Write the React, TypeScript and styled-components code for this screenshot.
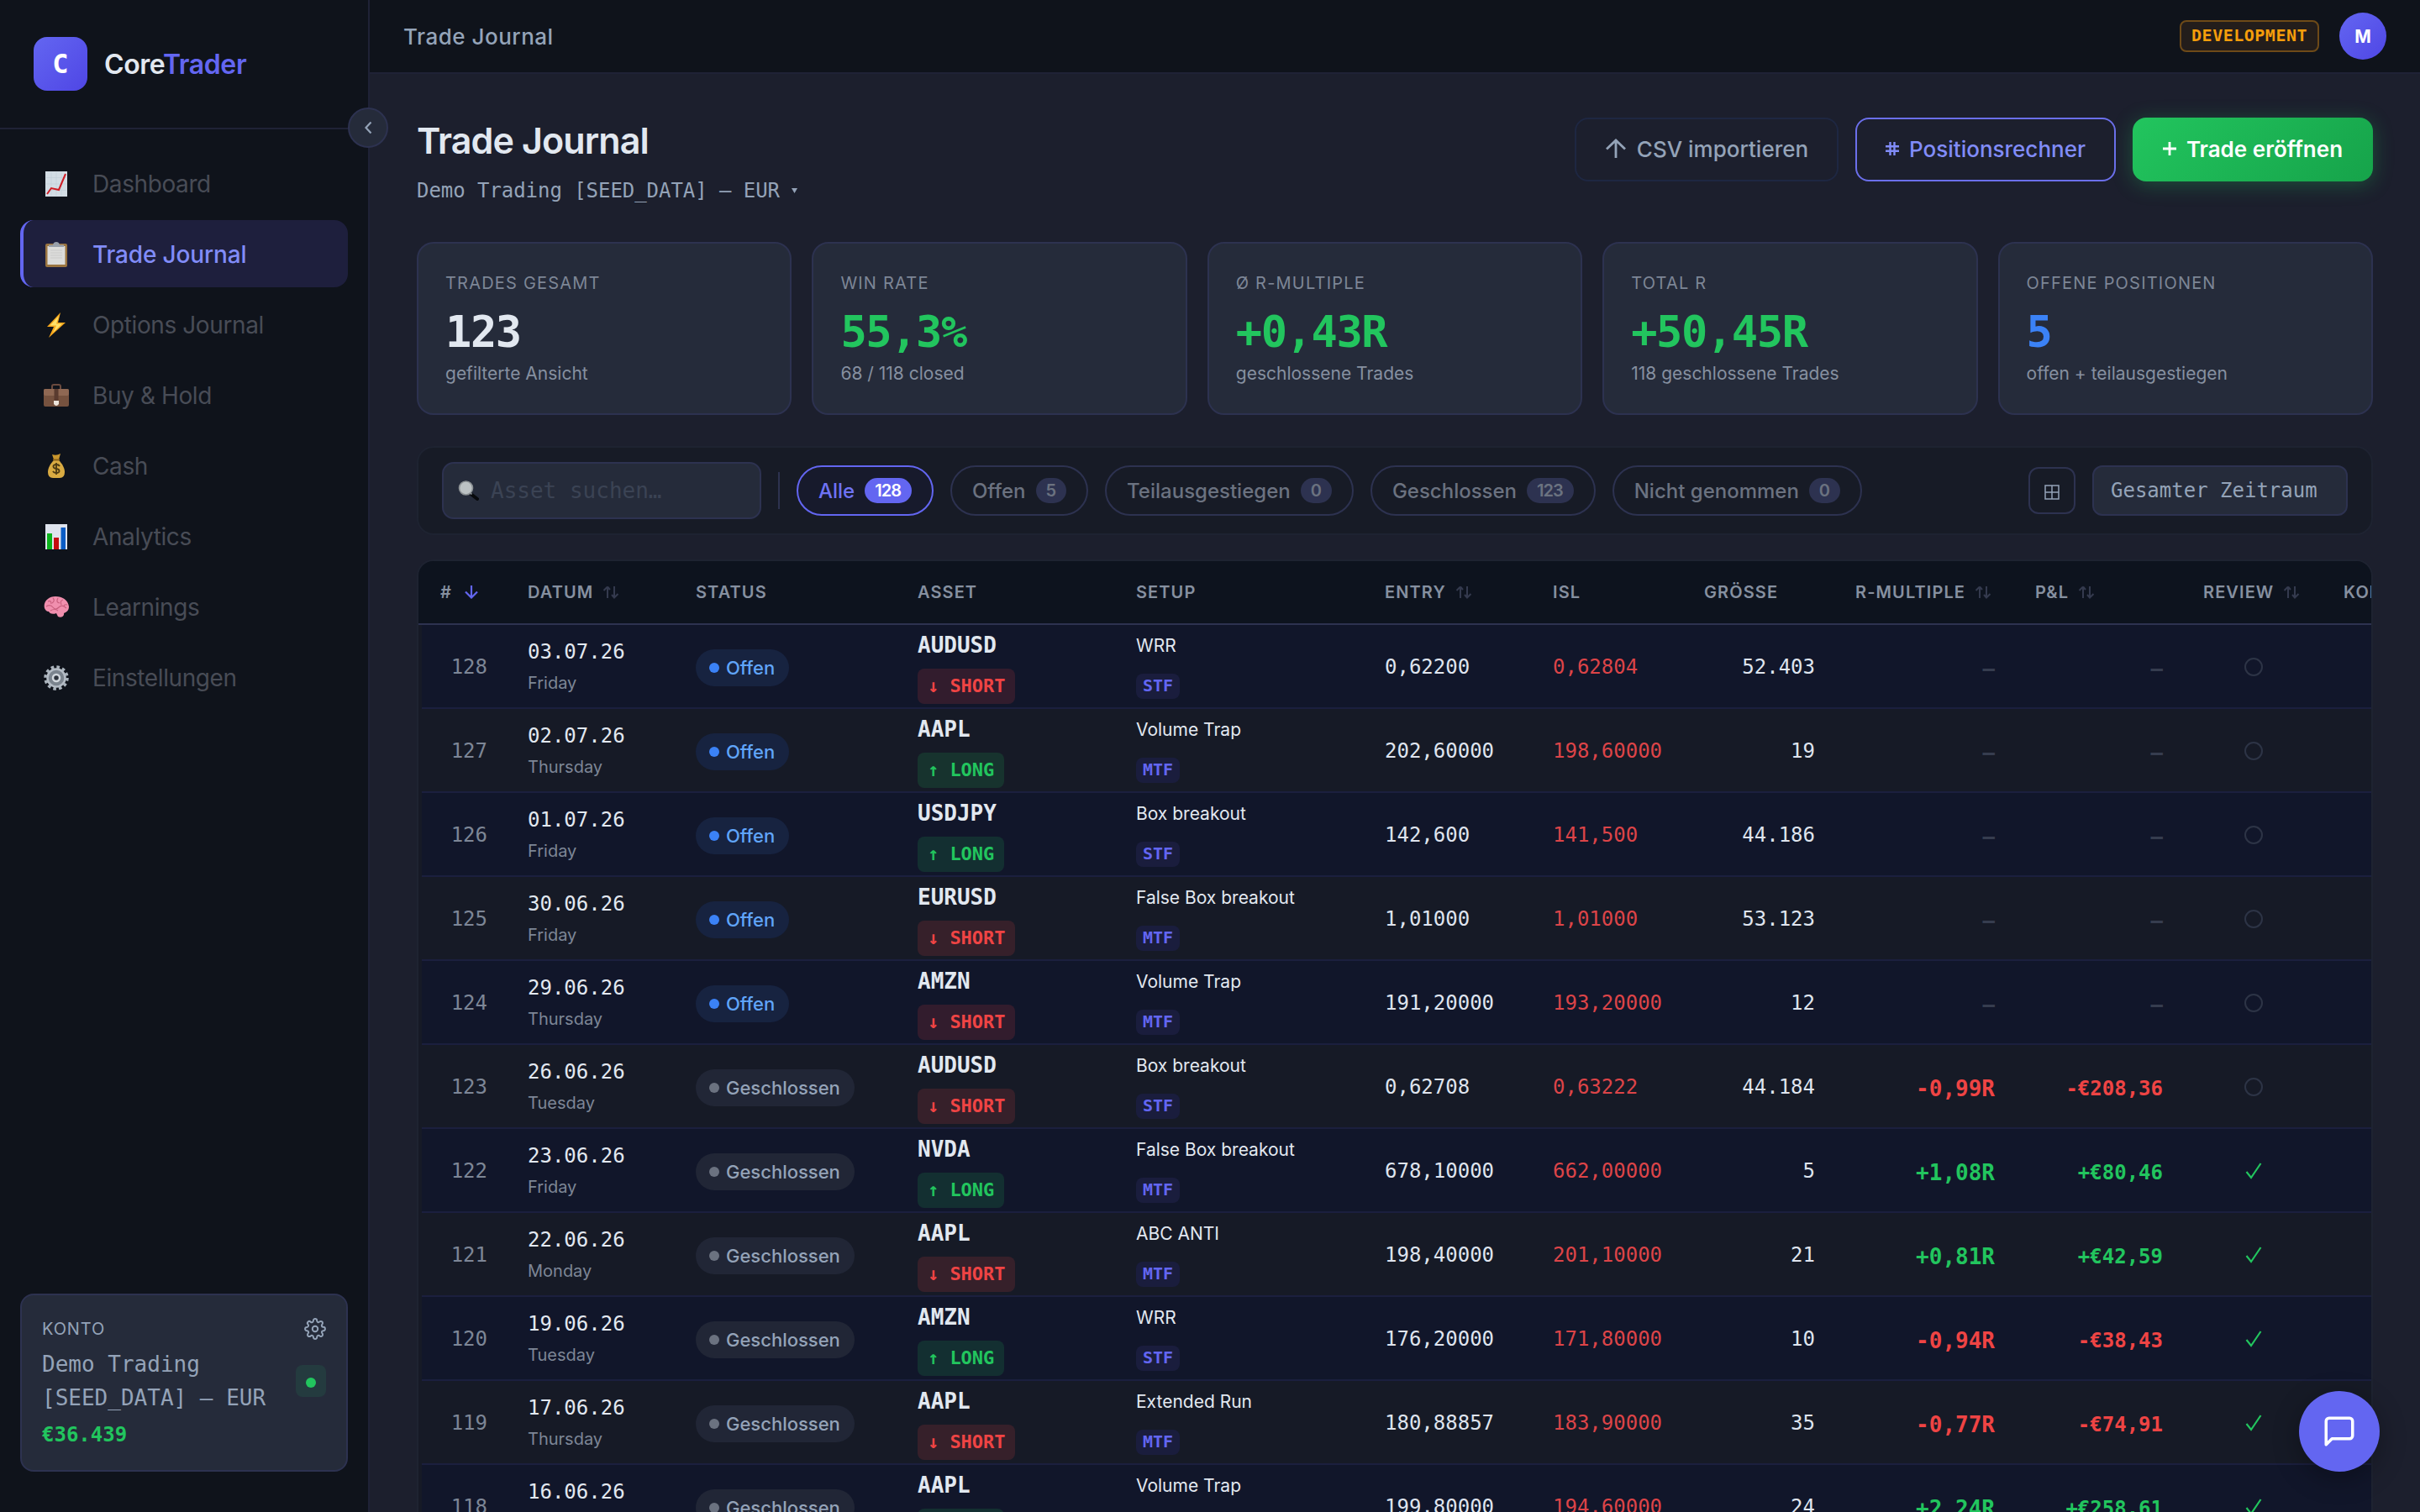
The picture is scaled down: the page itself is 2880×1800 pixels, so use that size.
import { ReactNode } from "react"
import styled, { createGlobalStyle } from "styled-components"

const sans = `Inter, "Open Sans", sans-serif`
const mono = `"DejaVu Sans Mono", "Liberation Mono", monospace`

const GlobalStyle = createGlobalStyle`
  * {
    box-sizing: border-box;
  }

  body {
    background: #1c1f2d;
    color: #e2e8f0;
    font-family: ${sans};
    margin: 0;
  }
`

const Layout = styled.div`
  display: flex;
  height: 1800px;
  overflow: hidden;
  position: relative;
  width: 2880px;
`

/* Sidebar */

const Sidebar = styled.aside`
  background: #0f131b;
  border-right: 2px solid #1f2236;
  display: flex;
  flex-direction: column;
  flex-shrink: 0;
  position: relative;
  width: 440px;
`

const Brand = styled.div`
  align-items: center;
  border-bottom: 2px solid #1f2236;
  display: flex;
  gap: 20px;
  height: 154px;
  padding: 0 40px;
`

const BrandMark = styled.div`
  align-items: center;
  background: linear-gradient(135deg, #6366f1, #4f46e5);
  border-radius: 16px;
  color: #fff;
  display: flex;
  font-family: ${mono};
  font-size: 32px;
  font-weight: 700;
  height: 64px;
  justify-content: center;
  width: 64px;
`

const BrandName = styled.div`
  font-size: 32px;
  font-weight: 600;
  letter-spacing: -0.4px;

  span {
    color: #6366f1;
  }
`

const CollapseButton = styled.button`
  align-items: center;
  background: #252b3a;
  border: 2px solid #2d3250;
  border-radius: 50%;
  color: #94a3b8;
  display: flex;
  height: 48px;
  justify-content: center;
  left: 414px;
  padding: 0;
  position: absolute;
  top: 128px;
  width: 48px;
  z-index: 2;
`

const Nav = styled.nav`
  display: flex;
  flex: 1;
  flex-direction: column;
  gap: 4px;
  padding: 24px;
`

const NavItem = styled.a<{ $active?: boolean }>`
  align-items: center;
  background: ${(props) => (props.$active ? "#1e1f3d" : "transparent")};
  border-left: 4px solid ${(props) => (props.$active ? "#6366f1" : "transparent")};
  border-radius: 16px;
  color: ${(props) => (props.$active ? "#818cf8" : "#484c56")};
  display: flex;
  font-size: 28px;
  font-weight: ${(props) => (props.$active ? 500 : 400)};
  gap: 24px;
  height: 80px;
  letter-spacing: ${(props) => (props.$active ? "-0.15px" : "-0.4px")};
  padding: 1px 0 0 20px;
`

const NavIcon = styled.span`
  display: flex;
  justify-content: center;
  width: 38px;
`

const Account = styled.div`
  background: #252b3a;
  border: 2px solid #2d3250;
  border-radius: 16px;
  height: 212px;
  margin: 0 24px 48px;
  padding: 26px 24px 0;
`

const AccountHead = styled.div`
  align-items: center;
  color: #94a3b8;
  display: flex;
  font-size: 20px;
  height: 28px;
  justify-content: space-between;
  letter-spacing: 0.9px;
`

const AccountBody = styled.div`
  align-items: center;
  display: flex;
  justify-content: space-between;
  margin-top: 8px;
`

const AccountName = styled.div`
  color: #94a3b8;
  font-family: ${mono};
  font-size: 26px;
  line-height: 40px;
  white-space: pre;
`

const AccountStatus = styled.div`
  align-items: center;
  background: #243b3f;
  border-radius: 8px;
  display: flex;
  height: 38px;
  justify-content: center;
  padding-top: 4px;
  width: 36px;
`

const Dot = styled.span<{ $color: string }>`
  background: ${(props) => props.$color};
  border-radius: 50%;
  height: 12px;
  width: 12px;
`

const AccountValue = styled.div`
  color: #22c55e;
  font-family: ${mono};
  font-size: 24px;
  font-weight: 700;
  line-height: 28px;
  margin-top: 10px;
`

/* Main column */

const Main = styled.main`
  display: flex;
  flex: 1;
  flex-direction: column;
  min-width: 0;
`

const TopBar = styled.header`
  align-items: center;
  background: #0f131b;
  border-bottom: 2px solid #1f2236;
  display: flex;
  flex-shrink: 0;
  gap: 24px;
  height: 88px;
  padding: 0 40px;
`

const TopTitle = styled.div`
  color: #94a3b8;
  flex: 1;
  font-size: 26px;
  font-weight: 500;
  letter-spacing: 0.5px;
`

const EnvBadge = styled.div`
  background: #231d1b;
  border: 2px solid #6e4a18;
  border-radius: 8px;
  color: #f59e0b;
  font-family: ${mono};
  font-size: 20px;
  font-weight: 700;
  height: 38px;
  letter-spacing: 0.5px;
  line-height: 33px;
  padding: 0 12px;
`

const Avatar = styled.div`
  align-items: center;
  background: linear-gradient(135deg, #6366f1, #4f46e5);
  border-radius: 50%;
  color: #fff;
  display: flex;
  font-size: 21px;
  font-weight: 700;
  height: 56px;
  justify-content: center;
  width: 56px;
`

const Content = styled.div`
  padding: 52px 56px 0;
`

const PageHead = styled.div`
  display: flex;
  height: 148px;
  justify-content: space-between;
`

const PageTitle = styled.h1`
  color: #e2e8f0;
  font-size: 43px;
  font-weight: 600;
  letter-spacing: -0.9px;
  line-height: 54px;
  margin: 0;
`

const PageAccount = styled.div`
  align-items: center;
  color: #94a3b8;
  display: flex;
  font-family: ${mono};
  font-size: 24px;
  gap: 14px;
  letter-spacing: -0.05px;
  line-height: 32px;
  margin-top: 17px;
`

const Actions = styled.div`
  display: flex;
  gap: 20px;
`

const ActionButton = styled.button<{ $kind: "ghost" | "outline" | "primary" }>`
  align-items: center;
  background: ${(props) =>
    props.$kind === "primary"
      ? "linear-gradient(135deg, #22c55e, #16a34a)"
      : "transparent"};
  border: ${(props) =>
    props.$kind === "primary"
      ? "none"
      : `2px solid ${props.$kind === "ghost" ? "#1e2742" : "#6b6fea"}`};
  border-radius: 16px;
  box-shadow: ${(props) =>
    props.$kind === "primary" ? "0 4px 24px rgba(34, 197, 94, 0.3)" : "none"};
  color: ${(props) =>
    ({ ghost: "#94a3b8", outline: "#818cf8", primary: "#fff" })[props.$kind]};
  display: flex;
  font-family: ${sans};
  font-size: 26px;
  font-weight: ${(props) => (props.$kind === "primary" ? 600 : 500)};
  gap: 12px;
  height: 76px;
  justify-content: center;
  padding: 0 0 2px;
  white-space: nowrap;
  width: ${(props) => ({ ghost: 314, outline: 310, primary: 286 })[props.$kind]}px;
`

const Cards = styled.div`
  display: grid;
  gap: 24px;
  grid-template-columns: repeat(5, 1fr);
`

const Card = styled.div`
  background: #252b3a;
  border: 2px solid #2d3250;
  border-radius: 20px;
  height: 206px;
  padding: 35px 32px 0;
`

const CardLabel = styled.div`
  color: #7d8696;
  font-size: 20px;
  letter-spacing: 1.2px;
  line-height: 24px;
`

const CardValue = styled.div<{ $color: string }>`
  color: ${(props) => props.$color};
  font-family: ${mono};
  font-size: 52px;
  font-weight: 700;
  letter-spacing: -1.4px;
  line-height: 60px;
  margin-top: 16px;
`

const CardHint = styled.div`
  color: #8690a0;
  font-size: 21px;
  line-height: 28px;
  margin-top: 6px;
`

const Filters = styled.div`
  align-items: center;
  background: #171b26;
  border: 2px solid #1e2331;
  border-radius: 20px;
  display: flex;
  gap: 20px;
  height: 106px;
  margin-top: 37px;
  padding: 0 28px;
`

const Search = styled.div`
  align-items: center;
  background: #252b3a;
  border: 2px solid #2d3250;
  border-radius: 14px;
  color: #3b4354;
  display: flex;
  font-family: ${mono};
  font-size: 26px;
  gap: 14px;
  height: 68px;
  padding-left: 17px;
  width: 380px;
`

const Divider = styled.div`
  background: #2d3250;
  height: 44px;
  width: 2px;
`

const Chip = styled.button<{ $active?: boolean }>`
  align-items: center;
  background: ${(props) => (props.$active ? "#171a2c" : "transparent")};
  border: 2px solid ${(props) => (props.$active ? "#6366f1" : "#2d3250")};
  border-radius: 30px;
  color: ${(props) => (props.$active ? "#6f73f5" : "#6b7280")};
  display: flex;
  font-family: ${sans};
  font-size: 24px;
  font-weight: 500;
  gap: 12px;
  height: 60px;
  padding: 0 24px;
  white-space: nowrap;
`

const ChipCount = styled.span<{ $active?: boolean }>`
  background: ${(props) => (props.$active ? "#6366f1" : "#2d3250")};
  border-radius: 15px;
  color: ${(props) => (props.$active ? "#fff" : "#6b7280")};
  font-size: 20px;
  font-weight: 600;
  height: 30px;
  letter-spacing: -1px;
  line-height: 30px;
  padding: 0 13px 0 12px;
`

const Spacer = styled.div`
  flex: 1;
`

const GridButton = styled.button`
  align-items: center;
  background: transparent;
  border: 2px solid #2d3250;
  border-radius: 12px;
  color: #94a3b8;
  display: flex;
  height: 56px;
  justify-content: center;
  padding: 4px 0 0;
  width: 56px;
`

const PeriodSelect = styled.div`
  background: #252b3a;
  border: 2px solid #2d3250;
  border-radius: 12px;
  color: #94a3b8;
  font-family: ${mono};
  font-size: 24px;
  height: 60px;
  line-height: 57px;
  padding-left: 20px;
  width: 304px;
`

/* Trades table */

const Table = styled.div`
  background: #161a26;
  border: 2px solid #1e2331;
  border-radius: 20px 20px 0 0;
  height: 1140px;
  margin-top: 29px;
  overflow: hidden;
`

const columns = "104px 200px 264px 260px 296px 200px 180px 180px 214px 200px 167px 200px"

const HeadRow = styled.div`
  align-items: center;
  background: #0d131e;
  border-bottom: 2px solid #2d3250;
  color: #8690a0;
  display: grid;
  font-size: 20px;
  font-weight: 600;
  grid-template-columns: ${columns};
  height: 76px;
  letter-spacing: 1.1px;
  padding-left: 26px;
`

const HeadCell = styled.div`
  align-items: center;
  display: flex;
  gap: 11px;
  white-space: nowrap;
`

const Row = styled.div<{ $tinted: boolean }>`
  align-items: center;
  background: ${(props) => (props.$tinted ? "#11162a" : "#161a26")};
  border-bottom: 2px solid #1b1f3e;
  display: grid;
  grid-template-columns: ${columns};
  height: 100px;
  margin-left: 4px;
  padding-left: 22px;
`

const NumberCell = styled.div<{ $color?: string; $right?: boolean }>`
  color: ${(props) => props.$color ?? "#dfe4ee"};
  font-family: ${mono};
  font-size: 24px;
  padding: 2px ${(props) => (props.$right ? 48 : 0)}px 0 0;
  text-align: ${(props) => (props.$right ? "right" : "left")};
`

const ResultCell = styled.div<{ $color: string; $size: number }>`
  color: ${(props) => props.$color};
  font-family: ${mono};
  font-size: ${(props) => props.$size}px;
  font-weight: 700;
  padding: 6px 48px 0 0;
  text-align: right;
`

const Stack = styled.div<{ $offset?: number }>`
  align-items: flex-start;
  display: flex;
  flex-direction: column;
  padding-top: ${(props) => props.$offset ?? 0}px;
`

const TradeDate = styled.div`
  font-family: ${mono};
  font-size: 24px;
  line-height: 32px;
`

const Weekday = styled.div`
  color: #7d8696;
  font-size: 20px;
  line-height: 28px;
  margin-top: 7px;
`

const StatusPill = styled.div<{ $open: boolean }>`
  align-items: center;
  background: ${(props) => (props.$open ? "#172340" : "#212636")};
  border-radius: 22px;
  color: ${(props) => (props.$open ? "#60a5fa" : "#94a3b8")};
  display: inline-flex;
  font-size: 22px;
  font-weight: 500;
  gap: 8px;
  height: 44px;
  margin-top: 4px;
  padding: 0 17px 0 16px;
`

const Symbol = styled.div`
  color: #e2e8f0;
  font-family: ${mono};
  font-size: 26px;
  font-weight: 700;
  line-height: 32px;
`

const SideBadge = styled.div<{ $long: boolean }>`
  background: ${(props) =>
    props.$long ? "rgba(34, 197, 94, 0.15)" : "rgba(239, 68, 68, 0.15)"};
  border-radius: 8px;
  color: ${(props) => (props.$long ? "#22c55e" : "#ef4444")};
  font-family: ${mono};
  font-size: 22px;
  font-weight: 700;
  height: 42px;
  letter-spacing: -0.05px;
  line-height: 41px;
  margin-top: 12px;
  padding: 0 12px;
`

const Setup = styled.div`
  font-size: 21px;
  line-height: 28px;
`

const Timeframe = styled.div`
  background: #1a1d3d;
  border-radius: 8px;
  color: #6366f1;
  font-family: ${mono};
  font-size: 20px;
  font-weight: 700;
  height: 30px;
  line-height: 29px;
  margin-top: 19px;
  padding: 0 8px;
`

const Review = styled.div`
  display: flex;
  justify-content: center;
  padding: 2px 48px 0 0;
`

const PendingMark = styled.span`
  border: 2px solid #2d3446;
  border-radius: 50%;
  height: 22px;
  width: 22px;
`

const ChatButton = styled.button`
  align-items: center;
  background: #6366f1;
  border: none;
  border-radius: 50%;
  bottom: 48px;
  box-shadow: 0 8px 32px rgba(0, 0, 0, 0.3);
  color: #fff;
  display: flex;
  height: 96px;
  justify-content: center;
  position: absolute;
  right: 48px;
  width: 96px;
`

/* Icons */

const ChartIcon = () => (
  <svg width="26" height="30" viewBox="0 0 26 30">
    <rect width="26" height="30" fill="#d3dde5" />
    <path d="M1 7.5h24M1 15h24M1 22.5h24M7 1v28M13 1v28M19 1v28" stroke="#c3d0da" strokeWidth="0.7" />
    <path d="M2 27l5-7 9 2 8-19" fill="none" stroke="#cf1d26" strokeWidth="2" />
  </svg>
)

const ClipboardIcon = () => (
  <svg width="26" height="30" viewBox="0 0 26 30">
    <rect y="2" width="26" height="28" rx="2" fill="#9a7440" />
    <rect x="2.5" y="5" width="21" height="22" fill="#dcdcda" />
    <path d="M6 10h14M6 13h14M6 16h14M6 19h14" stroke="#cacac9" strokeWidth="1" />
    <path d="M4 6V3.5h5C9.500 1 11 0 13 0s3.500 1 4 3.500h5V6z" fill="#98a0aa" />
  </svg>
)

const BoltIcon = () => (
  <svg width="26" height="30" viewBox="0 0 26 30">
    <path d="M18 0L2 17h8L4 30 24 12h-9z" fill="#f6a71c" />
    <path d="M16 4L5.500 15.500h7.500L9 24l11-10.500H13z" fill="#ffe169" />
  </svg>
)

const BriefcaseIcon = () => (
  <svg width="30" height="28" viewBox="0 0 30 28">
    <path d="M10 6V3q0-2 2-2h6q2 0 2 2v3" fill="none" stroke="#6a4a3e" strokeWidth="2" />
    <rect y="6" width="30" height="21" rx="2" fill="#76523f" />
    <rect y="6" width="30" height="8" rx="2" fill="#8f6853" />
    <rect x="12.500" y="6" width="5" height="14" fill="#5a3b2f" />
    <path d="M12 20h6v4q-3 4-6 0z" fill="#ece5dc" />
  </svg>
)

const MoneyIcon = () => (
  <svg width="24" height="30" viewBox="0 0 24 30">
    <path d="M7 1q5 2 10-1l-2 7H9z" fill="#c9962d" />
    <path d="M9 8h6c4 4 7 9 7 14q0 7-6 7H8q-6 0-6-7c0-5 3-10 7-14z" fill="#d9ab42" />
    <path d="M8 7.500h8" stroke="#8c6218" strokeWidth="2" />
    <path
      d="M16 15q-1-2-4-2c-5 0-4.500 4.500 0 5s5 5 0 5q-3 0-4-2M12 11v14"
      fill="none"
      stroke="#4c3a12"
      strokeWidth="1.800"
    />
  </svg>
)

const BarsIcon = () => (
  <svg width="26" height="30" viewBox="0 0 26 30">
    <rect width="26" height="30" fill="#dfe4ee" />
    <rect x="2" y="11" width="6" height="19" fill="#0bb31c" />
    <rect x="10" y="16" width="6" height="14" fill="#c50c10" />
    <rect x="18.500" y="4" width="5.500" height="26" fill="#0b5cc4" />
  </svg>
)

const BrainIcon = () => (
  <svg width="30" height="26" viewBox="0 0 30 26">
    <path
      d="M1 14C-1 6 6 0 14 0s15 4 16 12c0 5-3 7-6 8 1 4-4 6-7 4l-2-4c-5 2-8 0-9-2-3 0-4-2-5-4z"
      fill="#f08fae"
    />
    <path
      d="M5 6q4-2 4 3M11 2q3 3-1 6M17 2q-3 5 2 6M23 4q-4 1-2 6M3 12q5-3 8 1t7 0 9 1M8 17q5-3 9 0M28 10q-4-1-4 2"
      fill="none"
      stroke="#c9607f"
      strokeWidth="1.200"
    />
  </svg>
)

const CogIcon = () => (
  <svg width="30" height="30" viewBox="0 0 30 30">
    <circle cx="15" cy="15" r="13" fill="none" stroke="#aab3bc" strokeWidth="3.500" strokeDasharray="3.600 3.206" />
    <circle cx="15" cy="15" r="10.500" fill="#7b848e" stroke="#b4bcc5" strokeWidth="2.500" />
    <circle cx="15" cy="15" r="4" fill="#2e343d" stroke="#d2d8de" strokeWidth="2.500" />
  </svg>
)

const SearchIcon = () => (
  <svg width="25" height="24" viewBox="0 0 25 24">
    <path d="M14 15l9 7" stroke="#07090c" strokeWidth="4" strokeLinecap="round" />
    <path d="M13.500 14l3 2.500" stroke="#7a8087" strokeWidth="2" />
    <circle cx="9.500" cy="9" r="8" fill="#bcc2c4" stroke="#8b9093" strokeWidth="1.600" />
  </svg>
)

const GearIcon = () => (
  <svg width="26" height="26" viewBox="0 0 24 24" fill="none" stroke="#94a3b8" strokeWidth="1.800">
    <circle cx="12" cy="12" r="3" />
    <path d="M19.400 15a1.650 1.650 0 0 0 .33 1.820l.06.06a2 2 0 1 1-2.830 2.830l-.06-.06a1.650 1.650 0 0 0-1.820-.33 1.650 1.650 0 0 0-1 1.510V21a2 2 0 0 1-4 0v-.09A1.650 1.650 0 0 0 9 19.400a1.650 1.650 0 0 0-1.820.33l-.06.06a2 2 0 1 1-2.830-2.830l.06-.06a1.650 1.650 0 0 0 .33-1.820 1.650 1.650 0 0 0-1.510-1H3a2 2 0 0 1 0-4h.09A1.650 1.650 0 0 0 4.600 9a1.650 1.650 0 0 0-.33-1.820l-.06-.06a2 2 0 1 1 2.830-2.830l.06.06a1.650 1.650 0 0 0 1.820.33H9a1.650 1.650 0 0 0 1-1.510V3a2 2 0 0 1 4 0v.09a1.650 1.650 0 0 0 1 1.510 1.650 1.650 0 0 0 1.820-.33l.06-.06a2 2 0 1 1 2.830 2.830l-.06.06a1.650 1.650 0 0 0-.33 1.820V9a1.650 1.650 0 0 0 1.510 1H21a2 2 0 0 1 0 4h-.09a1.650 1.650 0 0 0-1.510 1z" />
  </svg>
)

const ChevronIcon = () => (
  <svg width="10" height="16" viewBox="0 0 10 16" fill="none" stroke="currentColor" strokeWidth="2.200">
    <path d="M8.500 1.500L2.500 8l6 6.500" />
  </svg>
)

const ArrowUpIcon = () => (
  <svg width="26" height="24" viewBox="0 0 26 24" fill="none" stroke="currentColor" strokeWidth="2.800">
    <path d="M13 23V2M2 12.500L13 2l11 10.500" />
  </svg>
)

const HashIcon = () => (
  <svg width="16" height="16" viewBox="0 0 16 16" fill="none" stroke="currentColor" strokeWidth="2.400">
    <path d="M5.500 0v16M10.500 0v16M0 5.200h16M0 10.800h16" />
  </svg>
)

const PlusIcon = () => (
  <svg width="16" height="16" viewBox="0 0 16 16" stroke="currentColor" strokeWidth="2.800">
    <path d="M8 0v16M0 8h16" />
  </svg>
)

const WindowIcon = () => (
  <svg width="18" height="18" viewBox="0 0 18 18" fill="none" stroke="currentColor" strokeWidth="1.500">
    <path d="M1 1h16v16H1zM9 1v16M1 9h16" />
  </svg>
)

const SortIcon = () => (
  <svg width="20" height="16" viewBox="0 0 20 16" fill="none" stroke="#343a4e" strokeWidth="2">
    <path d="M6 15V1.500M1.500 6L6 1.500M6 1.500L9 5M14 1v13.500M11 11l3 3.500 4.500-4.500" />
  </svg>
)

const SortDown = styled.svg`
  margin-left: 3px;
`

const SortDownIcon = () => (
  <SortDown width="18" height="16" viewBox="0 0 18 16" fill="none" stroke="#6366f1" strokeWidth="2.200">
    <path d="M9 0v14M2 7.500L9 14.500l7-7" />
  </SortDown>
)

const CheckIcon = () => (
  <svg width="20" height="20" viewBox="0 0 20 20" fill="none" stroke="#22c55e" strokeWidth="2.200">
    <path d="M1.500 11l5.500 7L18.500 1" />
  </svg>
)

const ChatIcon = () => (
  <svg
    width="42"
    height="42"
    viewBox="0 0 24 24"
    fill="none"
    stroke="currentColor"
    strokeWidth="2"
    strokeLinecap="round"
    strokeLinejoin="round"
  >
    <path d="M21 15a2 2 0 0 1-2 2H7l-4 4V5a2 2 0 0 1 2-2h14a2 2 0 0 1 2 2z" />
  </svg>
)

/* Data */

const navItems: { label: string; icon: ReactNode }[] = [
  { label: "Dashboard", icon: <ChartIcon /> },
  { label: "Trade Journal", icon: <ClipboardIcon /> },
  { label: "Options Journal", icon: <BoltIcon /> },
  { label: "Buy & Hold", icon: <BriefcaseIcon /> },
  { label: "Cash", icon: <MoneyIcon /> },
  { label: "Analytics", icon: <BarsIcon /> },
  { label: "Learnings", icon: <BrainIcon /> },
  { label: "Einstellungen", icon: <CogIcon /> },
]

const stats = [
  { label: "TRADES GESAMT", value: "123", hint: "gefilterte Ansicht", color: "#e2e8f0" },
  { label: "WIN RATE", value: "55,3%", hint: "68 / 118 closed", color: "#22c55e" },
  { label: "Ø R-MULTIPLE", value: "+0,43R", hint: "geschlossene Trades", color: "#22c55e" },
  { label: "TOTAL R", value: "+50,45R", hint: "118 geschlossene Trades", color: "#22c55e" },
  { label: "OFFENE POSITIONEN", value: "5", hint: "offen + teilausgestiegen", color: "#3b82f6" },
]

const chips = [
  { label: "Alle", count: 128 },
  { label: "Offen", count: 5 },
  { label: "Teilausgestiegen", count: 0 },
  { label: "Geschlossen", count: 123 },
  { label: "Nicht genommen", count: 0 },
]

const heads: { label: string; sort?: "down" | "both" }[] = [
  { label: "#", sort: "down" },
  { label: "DATUM", sort: "both" },
  { label: "STATUS" },
  { label: "ASSET" },
  { label: "SETUP" },
  { label: "ENTRY", sort: "both" },
  { label: "ISL" },
  { label: "GRÖSSE" },
  { label: "R-MULTIPLE", sort: "both" },
  { label: "P&L", sort: "both" },
  { label: "REVIEW", sort: "both" },
  { label: "KOMMENTAR" },
]

interface Trade {
  id: number
  date: string
  day: string
  asset: string
  long: boolean
  setup: string
  tf: string
  entry: string
  isl: string
  size: string
  r?: string
  pnl?: string
  reviewed?: boolean
}

const trades: Trade[] = [
  { id: 128, date: "03.07.26", day: "Friday", asset: "AUDUSD", long: false, setup: "WRR", tf: "STF", entry: "0,62200", isl: "0,62804", size: "52.403" },
  { id: 127, date: "02.07.26", day: "Thursday", asset: "AAPL", long: true, setup: "Volume Trap", tf: "MTF", entry: "202,60000", isl: "198,60000", size: "19" },
  { id: 126, date: "01.07.26", day: "Friday", asset: "USDJPY", long: true, setup: "Box breakout", tf: "STF", entry: "142,600", isl: "141,500", size: "44.186" },
  { id: 125, date: "30.06.26", day: "Friday", asset: "EURUSD", long: false, setup: "False Box breakout", tf: "MTF", entry: "1,01000", isl: "1,01000", size: "53.123" },
  { id: 124, date: "29.06.26", day: "Thursday", asset: "AMZN", long: false, setup: "Volume Trap", tf: "MTF", entry: "191,20000", isl: "193,20000", size: "12" },
  { id: 123, date: "26.06.26", day: "Tuesday", asset: "AUDUSD", long: false, setup: "Box breakout", tf: "STF", entry: "0,62708", isl: "0,63222", size: "44.184", r: "-0,99R", pnl: "-€208,36" },
  { id: 122, date: "23.06.26", day: "Friday", asset: "NVDA", long: true, setup: "False Box breakout", tf: "MTF", entry: "678,10000", isl: "662,00000", size: "5", r: "+1,08R", pnl: "+€80,46", reviewed: true },
  { id: 121, date: "22.06.26", day: "Monday", asset: "AAPL", long: false, setup: "ABC ANTI", tf: "MTF", entry: "198,40000", isl: "201,10000", size: "21", r: "+0,81R", pnl: "+€42,59", reviewed: true },
  { id: 120, date: "19.06.26", day: "Tuesday", asset: "AMZN", long: true, setup: "WRR", tf: "STF", entry: "176,20000", isl: "171,80000", size: "10", r: "-0,94R", pnl: "-€38,43", reviewed: true },
  { id: 119, date: "17.06.26", day: "Thursday", asset: "AAPL", long: false, setup: "Extended Run", tf: "MTF", entry: "180,88857", isl: "183,90000", size: "35", r: "-0,77R", pnl: "-€74,91", reviewed: true },
  { id: 118, date: "16.06.26", day: "Wednesday", asset: "AAPL", long: true, setup: "Volume Trap", tf: "MTF", entry: "199,80000", isl: "194,60000", size: "24", r: "+2,24R", pnl: "+€258,61", reviewed: true },
]

const resultColor = (value?: string) => {
  if (!value) return "#363d4f"
  return value.startsWith("+") ? "#22c55e" : "#ef4444"
}

const TradeRow = ({ trade, tinted }: { trade: Trade; tinted: boolean }) => {
  const open = !trade.r

  return (
    <Row $tinted={tinted}>
      <NumberCell $right $color="#7d8696">{trade.id}</NumberCell>
      <Stack>
        <TradeDate>{trade.date}</TradeDate>
        <Weekday>{trade.day}</Weekday>
      </Stack>
      <div>
        <StatusPill $open={open}>
          <Dot $color={open ? "#3b82f6" : "#6b7280"} />
          {open ? "Offen" : "Geschlossen"}
        </StatusPill>
      </div>
      <Stack $offset={3}>
        <Symbol>{trade.asset}</Symbol>
        <SideBadge $long={trade.long}>{trade.long ? "↑ LONG" : "↓ SHORT"}</SideBadge>
      </Stack>
      <Stack>
        <Setup>{trade.setup}</Setup>
        <Timeframe>{trade.tf}</Timeframe>
      </Stack>
      <NumberCell>{trade.entry}</NumberCell>
      <NumberCell $color="#dc4448">{trade.isl}</NumberCell>
      <NumberCell $right>{trade.size}</NumberCell>
      <ResultCell $color={resultColor(trade.r)} $size={trade.r ? 26 : 24}>
        {trade.r ?? "–"}
      </ResultCell>
      <ResultCell $color={resultColor(trade.pnl)} $size={24}>
        {trade.pnl ?? "–"}
      </ResultCell>
      <Review>{trade.reviewed ? <CheckIcon /> : <PendingMark />}</Review>
    </Row>
  )
}

export default function App() {
  return (
    <Layout>
      <GlobalStyle />
      <Sidebar>
        <Brand>
          <BrandMark>C</BrandMark>
          <BrandName>
            Core<span>Trader</span>
          </BrandName>
        </Brand>
        <CollapseButton>
          <ChevronIcon />
        </CollapseButton>
        <Nav>
          {navItems.map(({ label, icon }) => (
            <NavItem key={label} $active={label === "Trade Journal"}>
              <NavIcon>{icon}</NavIcon>
              {label}
            </NavItem>
          ))}
        </Nav>
        <Account>
          <AccountHead>
            KONTO
            <GearIcon />
          </AccountHead>
          <AccountBody>
            <AccountName>{"Demo Trading\n[SEED_DATA] – EUR"}</AccountName>
            <AccountStatus>
              <Dot $color="#22c55e" />
            </AccountStatus>
          </AccountBody>
          <AccountValue>€36.439</AccountValue>
        </Account>
      </Sidebar>
      <Main>
        <TopBar>
          <TopTitle>Trade Journal</TopTitle>
          <EnvBadge>DEVELOPMENT</EnvBadge>
          <Avatar>M</Avatar>
        </TopBar>
        <Content>
          <PageHead>
            <div>
              <PageTitle>Trade Journal</PageTitle>
              <PageAccount>
                Demo Trading [SEED_DATA] – EUR
                <svg width="7" height="6" viewBox="0 0 7 6" fill="currentColor">
                  <path d="M0 0h7L3.500 6z" />
                </svg>
              </PageAccount>
            </div>
            <Actions>
              <ActionButton $kind="ghost">
                <ArrowUpIcon />
                CSV importieren
              </ActionButton>
              <ActionButton $kind="outline">
                <HashIcon />
                Positionsrechner
              </ActionButton>
              <ActionButton $kind="primary">
                <PlusIcon />
                Trade eröffnen
              </ActionButton>
            </Actions>
          </PageHead>
          <Cards>
            {stats.map((stat) => (
              <Card key={stat.label}>
                <CardLabel>{stat.label}</CardLabel>
                <CardValue $color={stat.color}>{stat.value}</CardValue>
                <CardHint>{stat.hint}</CardHint>
              </Card>
            ))}
          </Cards>
          <Filters>
            <Search>
              <SearchIcon />
              Asset suchen…
            </Search>
            <Divider />
            {chips.map(({ label, count }) => (
              <Chip key={label} $active={label === "Alle"}>
                {label}
                <ChipCount $active={label === "Alle"}>{count}</ChipCount>
              </Chip>
            ))}
            <Spacer />
            <GridButton>
              <WindowIcon />
            </GridButton>
            <PeriodSelect>Gesamter Zeitraum</PeriodSelect>
          </Filters>
          <Table>
            <HeadRow>
              {heads.map(({ label, sort }) => (
                <HeadCell key={label}>
                  {label}
                  {sort === "down" && <SortDownIcon />}
                  {sort === "both" && <SortIcon />}
                </HeadCell>
              ))}
            </HeadRow>
            {trades.map((trade, index) => (
              <TradeRow key={trade.id} trade={trade} tinted={index % 2 === 0} />
            ))}
          </Table>
        </Content>
      </Main>
      <ChatButton>
        <ChatIcon />
      </ChatButton>
    </Layout>
  )
}
